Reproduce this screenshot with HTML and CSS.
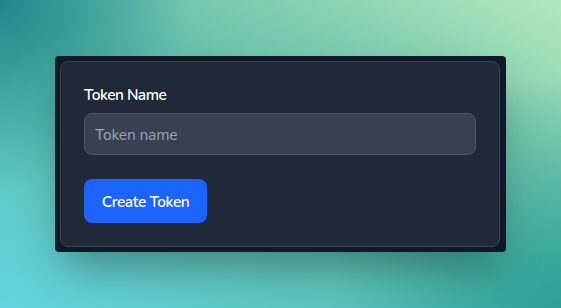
FILE: index.html
```html
<!DOCTYPE html>
<html lang="en">
<head>
<meta charset="utf-8">
<title>Create Token</title>
<link rel="stylesheet" href="styles.css">
</head>
<body>
  <main class="stage">
    <section class="frame">
      <form class="card">
        <label class="label" for="token-name">Token Name</label>
        <input class="input" id="token-name" type="text" placeholder="Token name">
        <button class="button" type="button">Create Token</button>
      </form>
    </section>
  </main>
</body>
</html>
```
FILE: styles.css
```css
* { box-sizing: border-box; }

html, body {
  margin: 0;
  width: 561px;
  height: 308px;
  overflow: hidden;
}

body {
  font-family: "Nunito", "Lato", "Noto Sans", sans-serif;
  background:
    radial-gradient(ellipse 320px 170px at 50% 50%, rgba(110, 195, 168, 0.55), rgba(110, 195, 168, 0) 100%),
    radial-gradient(circle at 0 0, #1f858b 0, rgba(31, 133, 139, 0.8) 30px, rgba(31, 133, 139, 0) 190px),
    radial-gradient(circle at 100% 100%, #2c9f96 0, rgba(44, 159, 150, 0.8) 40px, rgba(44, 159, 150, 0) 230px),
    linear-gradient(to top right, #62d5de 0%, #58b9aa 50%, #b3e8bc 100%);
}

.stage {
  width: 561px;
  height: 308px;
  display: flex;
  align-items: center;
  justify-content: center;
}

.frame {
  width: 451px;
  padding: 5px 6px 5px 5px;
  background: #111827;
  border-radius: 4px;
  box-shadow: 0 22px 40px -10px rgba(0, 0, 0, 0.35);
}

.card {
  display: flex;
  flex-direction: column;
  align-items: flex-start;
  width: 440px;
  padding: 23px;
  background: #1f2937;
  border: 1px solid #374151;
  border-radius: 8px;
  margin: 0;
}

.label {
  display: block;
  font-size: 15.5px;
  line-height: 20px;
  font-weight: 600;
  letter-spacing: -0.55px;
  color: #ffffff;
  margin-bottom: 8px;
}

.input {
  display: block;
  width: 100%;
  height: 42px;
  padding: 0 10px;
  background: #374151;
  border: 1px solid #4b5563;
  border-radius: 8px;
  font-family: inherit;
  font-size: 15.5px;
  letter-spacing: -0.15px;
  color: #e5e7eb;
  outline: none;
  margin: 0 0 24px;
}

.input::placeholder {
  color: #9ca3af;
}

.button {
  height: 44px;
  width: 123px;
  padding: 0;
  background: #1c63ff;
  border: none;
  border-radius: 8px;
  font-family: inherit;
  font-size: 15.5px;
  font-weight: 600;
  letter-spacing: -0.45px;
  color: #ffffff;
  cursor: pointer;
}
```
